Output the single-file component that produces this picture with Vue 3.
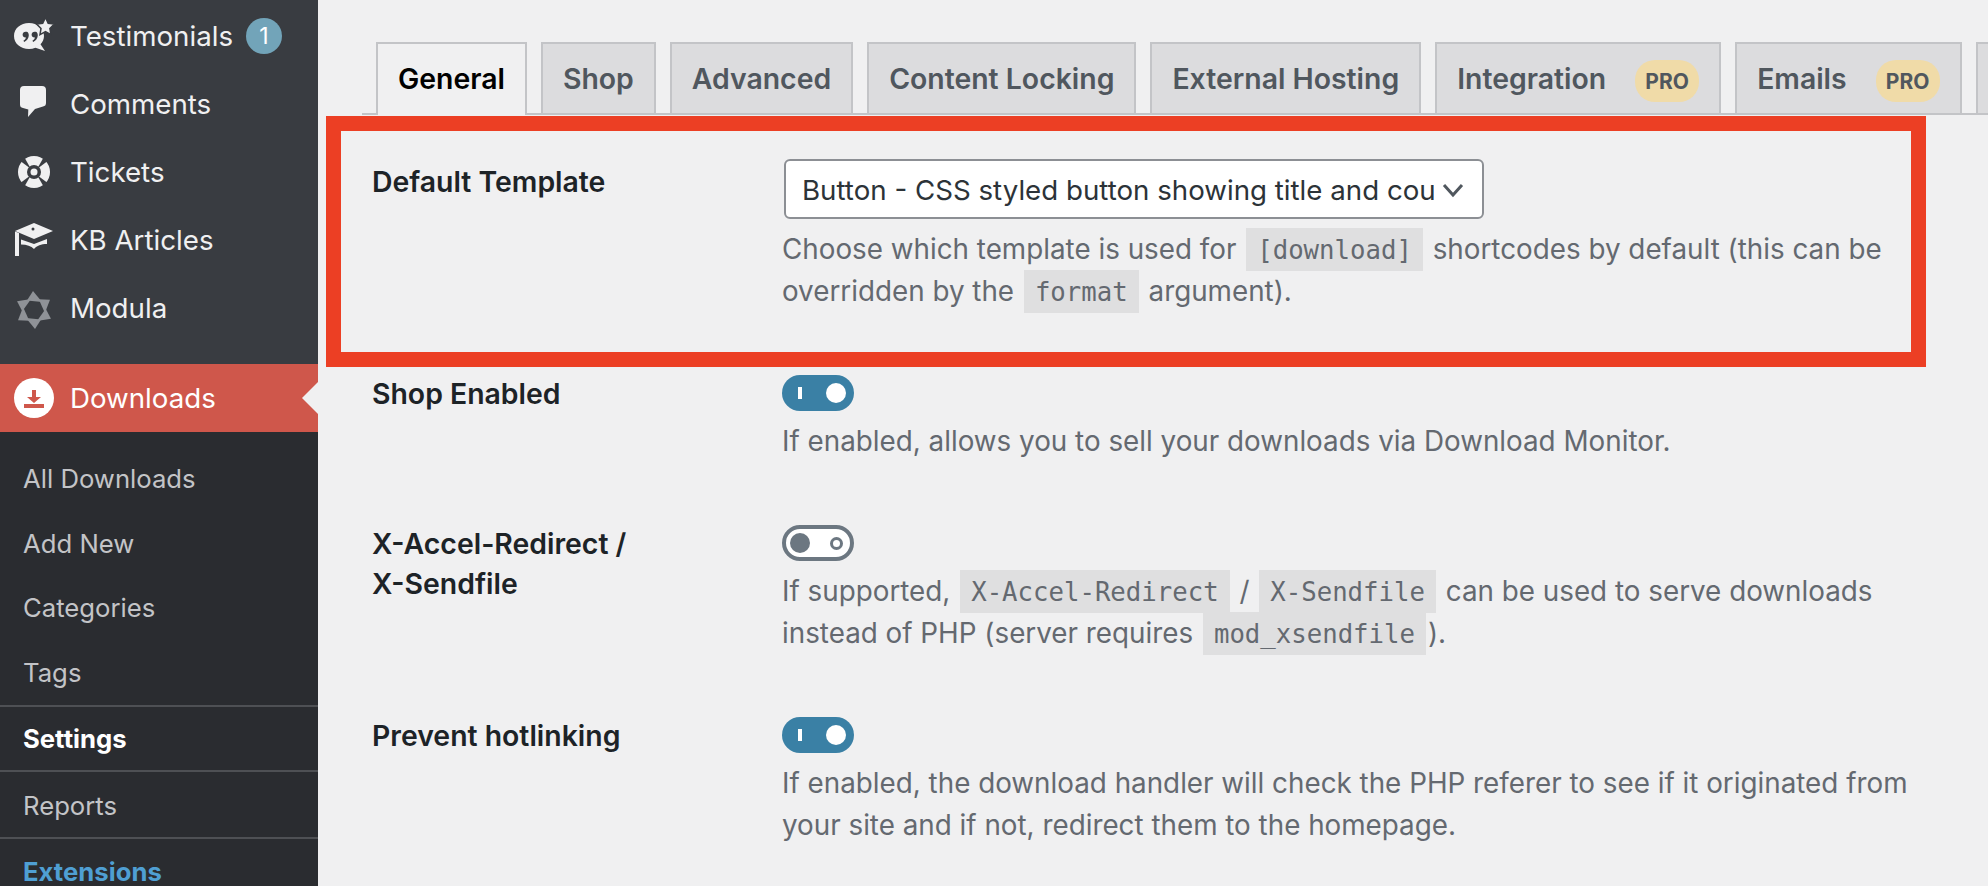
<script setup>
const tabs = [
  { label: 'General', active: true },
  { label: 'Shop' },
  { label: 'Advanced' },
  { label: 'Content Locking' },
  { label: 'External Hosting' },
  { label: 'Integration', pro: true },
  { label: 'Emails', pro: true },
  { label: '' }
]
const submenu = [
  { label: 'All Downloads' },
  { label: 'Add New' },
  { label: 'Categories' },
  { label: 'Tags' },
  { label: 'Settings', kind: 'cur' },
  { label: 'Reports', kind: 'lined' },
  { label: 'Extensions', kind: 'ext' }
]
const blades = [0, 60, 120, 180, 240, 300]
</script>

<template>
  <div class="page">
    <aside class="side">
      <ul class="menu">
        <li class="item">
          <svg class="ico" viewBox="0 0 40 40">
            <path fill="#f0f0f1" d="M15 7c8.500 0 15 5.500 15 13 0 3.300-1.300 6-3.500 8.200L31 35l-9.500-3.200c-2 .8-4.200 1.200-6.500 1.200C6.500 33 0 27.500 0 20S6.500 7 15 7z"/>
            <path fill="#393c41" d="M13.500 16c.9 1 1.300 2 1.300 3.300 0 3-1.900 5.300-4.600 6.700l-.8-1.300c1.500-1 2.400-2 2.600-3.200-2 .2-3.400-1-3.400-2.700 0-1.700 1.300-3 3-3 .7 0 1.400 0 1.900.2zm9 0c.9 1 1.300 2 1.300 3.300 0 3-1.900 5.300-4.600 6.700l-.8-1.300c1.500-1 2.400-2 2.600-3.200-2 .2-3.400-1-3.400-2.700 0-1.700 1.300-3 3-3 .7 0 1.400 0 1.900.2z"/>
            <path fill="#f0f0f1" stroke="#393c41" stroke-width="1.500" d="M31.500 1.500l2.700 5.700 6.100.9-4.400 4.300 1 6.200-5.400-2.900-5.500 2.900 1-6.200-4.400-4.300 6.100-.9z"/>
          </svg>
          <span>Testimonials</span><b class="badge">1</b>
        </li>
        <li class="item">
          <svg class="ico" viewBox="0 0 40 40"><path fill="#f0f0f1" d="M10 2h18a4 4 0 0 1 4 4v13a3.500 3.500 0 0 1-3 3.500L21 25l-7 8 .3-7.500L9 24a3.500 3.500 0 0 1-3-3.500V6a4 4 0 0 1 4-4z"/></svg>
          <span>Comments</span>
        </li>
        <li class="item">
          <svg class="ico" viewBox="0 0 40 40">
            <circle cx="20" cy="20" r="16" fill="#f0f0f1"/>
            <g fill="#393c41">
              <path d="M17 17L7 9.500A15 15 0 0 1 11 6.500z"/>
              <path d="M23 17L33 9.500A15 15 0 0 0 29 6.500z"/>
              <path d="M17 23L7 30.500A15 15 0 0 0 11 33.500z"/>
              <path d="M23 23L33 30.500A15 15 0 0 1 29 33.500z"/>
            </g>
            <circle cx="20" cy="20" r="7" fill="#393c41"/>
            <circle cx="20" cy="20" r="3.500" fill="#f0f0f1"/>
          </svg>
          <span>Tickets</span>
        </li>
        <li class="item">
          <svg class="ico" viewBox="0 0 40 40">
            <path fill="#f0f0f1" d="M20 3l19 8-19 8-19-8z"/>
            <circle cx="19" cy="9" r="1.500" fill="#393c41"/>
            <path fill="#f0f0f1" d="M7 19.500l13 4.500 13-5v5c-6 0-10 1.500-13 5-3-3-7-4.500-13-4.500z"/>
            <path fill="#f0f0f1" d="M1 11.500l4 1.500v23H1z"/>
          </svg>
          <span>KB Articles</span>
        </li>
        <li class="item">
          <svg class="ico modula" viewBox="0 0 40 40">
            <g fill="#8f9297">
              <path v-for="b in blades" :key="b" :transform="`translate(20 22) rotate(${b})`" d="M-1-19L8-8-7-9.500z"/>
            </g>
          </svg>
          <span>Modula</span>
        </li>
      </ul>
      <div class="active-item">
        <svg class="ico" viewBox="0 0 40 40"><circle cx="20" cy="20" r="20" fill="#fff"/><path fill="#cf574b" d="M10 26h20v4H10zM18 12h4v7h5l-7 6-7-6h5z"/></svg>
        <span>Downloads</span>
        <i class="arrow"></i>
      </div>
      <ul class="sub">
        <li v-for="s in submenu" :key="s.label" :class="['subitem', s.kind]">{{ s.label }}</li>
      </ul>
    </aside>

    <main class="main">
      <nav class="tabs">
        <div v-for="(t, i) in tabs" :key="i" :class="['tab', { active: t.active }]">
          <span>{{ t.label }}</span><em v-if="t.pro" class="pro">PRO</em>
        </div>
      </nav>

      <section class="rows">
        <div class="row r1">
          <div class="label l1">Default Template</div>
          <div class="field">
            <div class="select">
              <span class="seltext">Button - CSS styled button showing title and count</span>
              <svg class="chev" viewBox="0 0 24 24"><path d="M3 7l9 10 9-10" fill="none" stroke="#50575e" stroke-width="3"/></svg>
            </div>
            <p class="desc gap">Choose which template is used for <code>[download]</code> shortcodes by default (this can be overridden by the <code>format</code> argument).</p>
          </div>
        </div>
        <div class="row r2">
          <div class="label">Shop Enabled</div>
          <div class="field">
            <div class="toggle on"><i class="tick"></i><i class="knob"></i></div>
            <p class="desc gap">If enabled, allows you to sell your downloads via Download Monitor.</p>
          </div>
        </div>
        <div class="row r3">
          <div class="label">X-Accel-Redirect /<br>X-Sendfile</div>
          <div class="field">
            <div class="toggle off"><i class="knob"></i><i class="ring"></i></div>
            <p class="desc gap">If supported, <code>X-Accel-Redirect</code> / <code>X-Sendfile</code> can be used to serve downloads instead of PHP (server requires <code>mod_xsendfile</code>).</p>
          </div>
        </div>
        <div class="row r4">
          <div class="label">Prevent hotlinking</div>
          <div class="field">
            <div class="toggle on"><i class="tick"></i><i class="knob"></i></div>
            <p class="desc gap">If enabled, the download handler will check the PHP referer to see if it originated from your site and if not, redirect them to the homepage.</p>
          </div>
        </div>
      </section>

      <div class="marker"></div>
    </main>
  </div>
</template>

<style>
html, body { margin: 0; overflow: hidden; background: #f0f0f1; }
</style>

<style scoped>
.page {
  display: flex;
  width: 1988px;
  height: 886px;
  overflow: hidden;
  font-family: Inter, "Noto Sans", sans-serif;
  background: #f0f0f1;
}
ul { list-style: none; margin: 0; padding: 0; }
.side {
  flex: 0 0 318px;
  background: #393c41;
  display: flex;
  flex-direction: column;
}
.menu { padding: 2px 0 22px; flex: none; }
.item, .active-item {
  height: 68px;
  flex: none;
  display: flex;
  align-items: center;
  gap: 16px;
  padding-left: 14px;
  font-size: 27.700px;
  color: #f0f0f1;
  box-sizing: border-box;
}
.ico { width: 40px; height: 40px; flex: none; overflow: visible; }
.badge {
  width: 36px;
  height: 36px;
  margin-left: -3px;
  border-radius: 50%;
  background: #72a4b9;
  color: #fff;
  font-weight: 400;
  font-size: 23px;
  display: flex;
  align-items: center;
  justify-content: center;
}
.active-item { position: relative; background: #cf574b; color: #fff; }
.arrow {
  position: absolute;
  right: 0;
  top: 18px;
  border: 16px solid transparent;
  border-left-width: 0;
  border-right-color: #f0f0f1;
}
.sub { flex: 1; background: #2a2c30; padding-top: 15px; }
.subitem {
  height: 64.500px;
  line-height: 64.500px;
  padding-left: 23px;
  font-size: 25.700px;
  color: #c3c4c7;
  box-sizing: border-box;
}
.subitem.cur {
  color: #fff;
  font-weight: 700;
  border-top: 2px solid #4e5054;
  border-bottom: 2px solid #4e5054;
  height: 67px;
  line-height: 63px;
}
.subitem.lined { border-bottom: 2px solid #4e5054; height: 67px; line-height: 67px; }
.subitem.ext { color: #4f9fd3; font-weight: 700; line-height: 66px; }

.main { flex: 1; min-width: 0; position: relative; }
.tabs {
  display: flex;
  gap: 14px;
  margin: 42px 0 0 44px;
  padding-left: 14px;
  height: 73px;
  box-sizing: border-box;
  border-bottom: 2px solid #c3c4c7;
}
.tab {
  flex: none;
  height: 69px;
  padding: 0 20px;
  border: 2px solid #c3c4c7;
  border-bottom: 0;
  background: #dcdcde;
  color: #50575e;
  font-size: 28.400px;
  font-weight: 600;
  display: flex;
  align-items: center;
  gap: 29px;
}
.tab.active {
  background: #f0f0f1;
  color: #000;
  padding-bottom: 2px;
}
.pro {
  font-style: normal;
  font-size: 21px;
  font-weight: 700;
  color: #50575e;
  background: #f0dba8;
  border-radius: 20px;
  height: 42px;
  width: 64px;
  margin-top: 5px;
  display: flex;
  align-items: center;
  justify-content: center;
}
.rows { padding-left: 54px; }
.row { display: grid; grid-template-columns: 410px 1135px; box-sizing: border-box; }
.label {
  font-size: 28.400px;
  font-weight: 600;
  line-height: 40px;
  color: #1d2327;
  margin-top: -1px;
}
.label.l1 { margin-top: 3px; }
.desc {
  margin: 0;
  font-size: 27.800px;
  line-height: 41.500px;
  color: #646970;
}
.gap { margin-top: 10px; }
.r1 { padding-top: 44px; height: 260px; }
.r2 { height: 150px; }
.r3 { height: 192px; }
.select {
  width: 700px;
  height: 60px;
  margin-left: 2px;
  box-sizing: border-box;
  border: 2px solid #8c8f94;
  border-radius: 6px;
  background: #fff;
  padding: 1px 16px 0;
  display: flex;
  align-items: center;
  font-size: 27.700px;
  color: #2c3338;
}
.seltext { width: 632px; overflow: hidden; white-space: nowrap; flex: none; }
.chev { width: 24px; height: 24px; flex: none; margin-left: 7px; }
code {
  font-family: "DejaVu Sans Mono", "Liberation Mono", monospace;
  font-size: 25.700px;
  line-height: 1;
  background: #dfdfe0;
  padding: 7px 11px 6px;
  margin: 0 2px;
}
.toggle {
  width: 72px;
  height: 36px;
  box-sizing: border-box;
  border-radius: 18px;
  position: relative;
}
.toggle.on { background: #3a80a5; }
.toggle.off { background: #fff; border: 4px solid #6c7781; }
.knob { position: absolute; width: 20px; height: 20px; border-radius: 50%; }
.on .knob { right: 8px; top: 8px; background: #fff; }
.off .knob { left: 4px; top: 4px; background: #6c7781; }
.tick { position: absolute; left: 16px; top: 12px; width: 4px; height: 12px; background: #fff; }
.ring { position: absolute; right: 7px; top: 7.500px; width: 13px; height: 13px; box-sizing: border-box; border: 3.500px solid #6c7781; border-radius: 50%; }
.marker {
  position: absolute;
  left: 8px;
  top: 116px;
  width: 1600px;
  height: 251px;
  box-sizing: border-box;
  border: 15px solid #ec3f24;
  pointer-events: none;
}
</style>
